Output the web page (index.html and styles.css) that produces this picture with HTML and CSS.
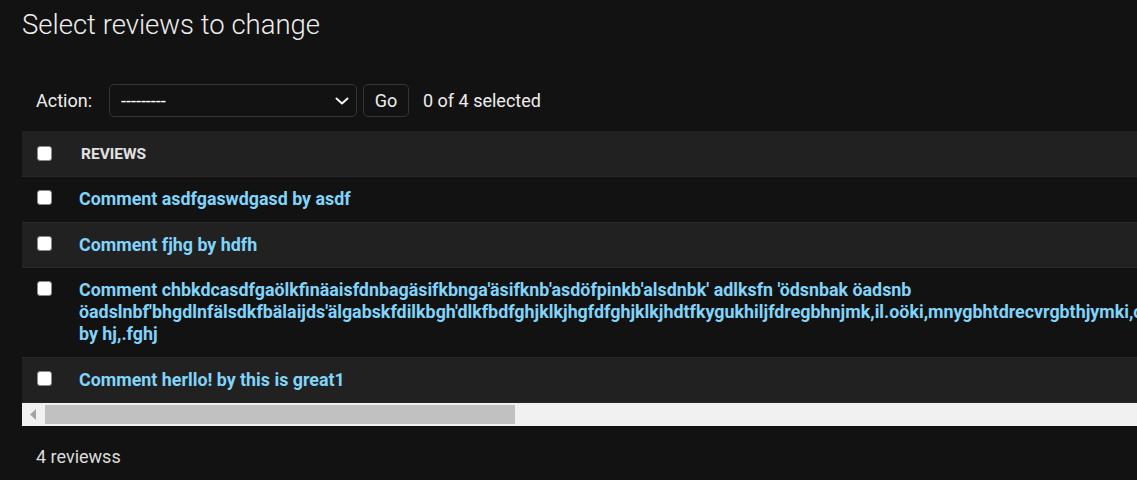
FILE: index.html
```html
<!DOCTYPE html>
<html lang="en">
<head>
<meta charset="utf-8">
<title>Select reviews to change</title>
<link rel="stylesheet" href="styles.css">
</head>
<body>
<div class="content">
  <h1 class="title">Select reviews to change</h1>
  <form class="changelist">
    <div class="actions">
      <label class="action-label" for="action">Action:</label>
      <div class="select-wrap">
        <select id="action" class="action-select">
          <option>---------</option>
          <option>Delete selected reviews</option>
        </select>
        <svg class="chevron" width="14" height="8" viewBox="0 0 14 8" aria-hidden="true"><path d="M1.5 1.5 L7 6.5 L12.5 1.5" fill="none" stroke="#f2f2f2" stroke-width="2" stroke-linecap="round" stroke-linejoin="round"/></svg>
      </div>
      <button type="button" class="go-btn">Go</button>
      <span class="counter">0 of 4 selected</span>
    </div>
    <div class="results">
      <table class="result-list">
        <thead>
          <tr>
            <th class="cb-col"><input type="checkbox" class="cb"></th>
            <th class="name-col">Reviews</th>
          </tr>
        </thead>
        <tbody>
          <tr>
            <td class="cb-col"><input type="checkbox" class="cb"></td>
            <td class="name-col"><a href="#">Comment asdfgaswdgasd by asdf</a></td>
          </tr>
          <tr>
            <td class="cb-col"><input type="checkbox" class="cb"></td>
            <td class="name-col"><a href="#">Comment fjhg by hdfh</a></td>
          </tr>
          <tr>
            <td class="cb-col"><input type="checkbox" class="cb"></td>
            <td class="name-col"><a href="#">Comment chbkdcasdfgaölkfinäaisfdnbagäsifkbnga'äsifknb'asdöfpinkb'alsdnbk' adlksfn 'ödsnbak öadsnb öadslnbf'bhgdlnfälsdkfbälaijds'älgabskfdilkbgh'dlkfbdfghjklkjhgfdfghjklkjhdtfkygukhiljfdregbhnjmk,il.oöki,mnygbhtdrecvrgbthjymki,cvbnhjmkl.öäölkjhgfdsyxcvbnm,.ölkjhgfdsaqwertzuiopüasdfghjklöäyxcvbnm,.öklkjhgfdsdfghjkkjhgfdsdfghjklkjhgfdfghjkjhgfdsdfghjkljhgfdsasdfghjklöäölkjhgfdsaasdfghjk by hj,.fghj</a></td>
          </tr>
          <tr>
            <td class="cb-col"><input type="checkbox" class="cb"></td>
            <td class="name-col"><a href="#">Comment herllo! by this is great1</a></td>
          </tr>
        </tbody>
      </table>
    </div>
    <div class="hscroll" aria-hidden="true">
      <div class="hscroll-btn">
        <svg width="23" height="23" viewBox="0 0 23 23"><path d="M8 11.5 L14 6 L14 17 Z" fill="#a3a3a3"/></svg>
      </div>
      <div class="hscroll-thumb"></div>
    </div>
    <p class="paginator">4 reviewss</p>
  </form>
</div>
</body>
</html>
```

FILE: styles.css
```css
html, body {
  margin: 0;
  padding: 0;
  background: #121212;
}

body {
  font-family: Roboto, "Liberation Sans", sans-serif;
  color: #eeeeee;
}

.content {
  padding: 7px 0 0 22px;
}

.title {
  margin: 0;
  font-size: 27.5px;
  line-height: 36px;
  font-weight: 300;
  color: #eeeeee;
}

.actions {
  display: flex;
  align-items: center;
  height: 33px;
  margin: 41px 0 14px;
  padding-left: 14px;
  font-size: 18px;
}

.action-label {
  color: #eeeeee;
  margin-right: 17px;
}

.select-wrap {
  position: relative;
  width: 248px;
  height: 33px;
}

.action-select {
  appearance: none;
  -webkit-appearance: none;
  box-sizing: border-box;
  width: 100%;
  height: 100%;
  margin: 0;
  padding: 0 30px 0 11px;
  background: #121212;
  color: #ffffff;
  border: 1px solid #353535;
  border-radius: 5px;
  font-family: inherit;
  font-size: 18px;
}

.chevron {
  position: absolute;
  right: 8px;
  top: 13px;
  pointer-events: none;
}

.go-btn {
  box-sizing: border-box;
  height: 33px;
  width: 46px;
  margin: 0 14px 0 6px;
  padding: 0;
  background: #121212;
  color: #eeeeee;
  border: 1px solid #353535;
  border-radius: 5px;
  font-family: inherit;
  font-size: 18px;
}

.counter {
  color: #eeeeee;
}

.results {
  overflow: hidden;
}

.result-list {
  border-collapse: collapse;
  width: 100%;
}

.result-list th,
.result-list td {
  text-align: left;
  border-bottom: 1px solid #282828;
}

.result-list thead th {
  background: #212121;
  height: 45px;
  padding: 0;
  vertical-align: middle;
  font-size: 15.5px;
  font-weight: 700;
  text-transform: uppercase;
  color: #e2e2e2;
}

.result-list thead th.name-col {
  padding-left: 17px;
}

.result-list td {
  padding: 11.25px 0;
  vertical-align: top;
}

.result-list tbody tr:nth-child(even) td {
  background: #212121;
}

.result-list .cb-col {
  width: 15px;
  padding-left: 15px;
  padding-right: 12px;
}

.result-list .name-col {
  padding-left: 15px;
  padding-right: 15px;
}

.cb {
  appearance: none;
  -webkit-appearance: none;
  display: block;
  box-sizing: border-box;
  width: 15px;
  height: 15px;
  margin: 0;
  background: #ffffff;
  border: 1px solid #8a8a8a;
  border-radius: 3px;
}

.result-list td .cb {
  margin-top: 2px;
}

.result-list a {
  color: #81d4fa;
  font-weight: 700;
  font-size: 17.85px;
  line-height: 22px;
  text-decoration: none;
}

.hscroll {
  display: flex;
  height: 23px;
  background: #f1f1f1;
}

.hscroll-btn {
  width: 23px;
  height: 23px;
  flex: none;
}

.hscroll-btn svg {
  display: block;
}

.hscroll-thumb {
  width: 470px;
  margin: 2px 0;
  background: #c1c1c1;
}

.paginator {
  margin: 0;
  padding: 20px 0 0 14px;
  font-size: 18px;
  line-height: 22px;
  color: #dddddd;
}
```
